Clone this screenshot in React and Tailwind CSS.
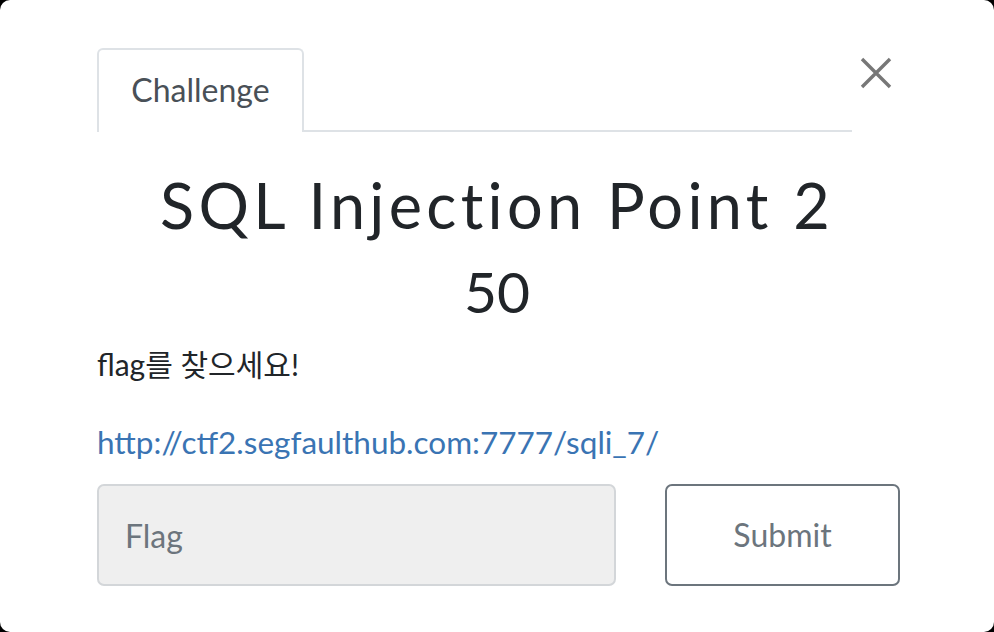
import React from "react";

export default function App() {
  return (
    <div className="h-[632px] w-[994px] bg-black overflow-hidden">
      <div
        className="relative h-full w-full bg-white rounded-[10px] text-[#212529]"
        style={{ fontFamily: "Lato, 'Noto Sans CJK KR', sans-serif" }}
      >
        <div className="pl-[97px] pt-[48px] flex">
          <div className="flex w-[755px] border-b-2 border-[#dee2e6]">
            <div className="-mb-[2px] flex h-[84px] w-[207px] items-center justify-center rounded-t-[6px] border-2 border-b-0 border-[#dee2e6] bg-white pb-[2px] text-[32px] text-[#495057]">
              Challenge
            </div>
          </div>
        </div>

        <button className="absolute left-[857px] top-[54px] flex h-[38px] w-[38px] items-center justify-center text-[#777]">
          <svg width="34" height="34" viewBox="0 0 34 34">
            <path d="M3 3L31 31M31 3L3 31" stroke="currentColor" strokeWidth="3.4" fill="none" />
          </svg>
        </button>

        <h3 className="mt-[35px] text-center text-[63px] leading-[76px] tracking-[4.3px] text-[#212529]">
          SQL Injection Point 2
        </h3>
        <h4 className="mt-[14px] text-center text-[57px] leading-[68px] text-[#212529]">50</h4>

        <div className="pl-[97px] pr-[90px]">
          <p className="mt-[19px] text-[30px] leading-[40px]">flag를 찾으세요!</p>
          <p className="mt-[38px] text-[31.5px] leading-[40px]">
            <a href="#" className="text-[#3a74b3]">
              http://ctf2.segfaulthub.com:7777/sqli_7/
            </a>
          </p>

          <div className="mt-[22px] flex items-center">
            <input
              placeholder="Flag"
              className="h-[102px] w-[519px] shrink-0 rounded-[7px] border-2 border-[#d3d6d9] bg-[#efefef] px-[26px] text-[32px] text-[#495057] placeholder:text-[#6c757d] outline-none"
            />
            <button className="ml-[49px] h-[102px] w-[235px] shrink-0 rounded-[7px] border-2 border-[#6c757d] bg-white text-[32px] text-[#6c757d]">
              Submit
            </button>
          </div>
        </div>
      </div>
    </div>
  );
}
